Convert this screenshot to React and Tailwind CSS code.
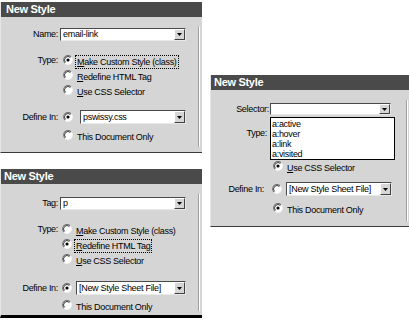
import React from "react";

const FONT = { fontFamily: '"Liberation Sans", Arial, sans-serif' };

function Radio({ checked }) {
  return (
    <svg width="10" height="10" viewBox="0 0 12 12" className="shrink-0">
      <circle cx="6" cy="6" r="5.2" fill="#ffffff" />
      <path d="M2.32 9.68 A5.2 5.2 0 0 1 9.68 2.32" fill="none" stroke="#707070" strokeWidth="1.3" />
      <path d="M3.1 8.9 A4.1 4.1 0 0 1 8.9 3.1" fill="none" stroke="#1a1a1a" strokeWidth="1" />
      <path d="M9.68 2.32 A5.2 5.2 0 0 1 2.32 9.68" fill="none" stroke="#f6f6f6" strokeWidth="1.3" />
      {checked && <circle cx="6" cy="6" r="1.9" fill="#000000" />}
    </svg>
  );
}

function Combo({ w, h, text }) {
  return (
    <div
      className={`flex bg-white border border-t-[#4a4a4a] border-l-[#4a4a4a] border-r-[#e8e8e8] border-b-[#e8e8e8] ${w} ${h}`}
    >
      <div className="flex-1 flex items-center pl-[2px] text-[9px] tracking-[-0.3px] text-black leading-none overflow-hidden whitespace-nowrap">
        {text}
      </div>
      <div className="w-[11px] h-full bg-[#d6d6d6] border border-t-white border-l-white border-r-[#404040] border-b-[#404040] flex items-center justify-center">
        <svg width="5" height="3" viewBox="0 0 5 3">
          <path d="M0 0 H5 L2.5 3 Z" fill="#000" />
        </svg>
      </div>
    </div>
  );
}

function Label({ w, children }) {
  return (
    <div className={`${w} text-right text-[9px] tracking-[-0.3px] text-black leading-none whitespace-nowrap`}>
      {children}
    </div>
  );
}

function Opt({ children, focus }) {
  return (
    <span
      className={`text-[9px] tracking-[-0.3px] text-black leading-none whitespace-nowrap px-[1px] py-[1px] ${
        focus ? "outline-1 outline-dotted outline-black" : ""
      }`}
    >
      {children}
    </span>
  );
}

function TitleBar({ pl }) {
  return (
    <div className={`h-[15px] bg-[#4a4a4a] flex items-center ${pl}`}>
      <span className="text-white font-bold text-[11px] tracking-[-0.3px] leading-none">New Style</span>
    </div>
  );
}

function Separator({ mt, mb }) {
  return <div className={`w-[2px] border-l border-l-[#a0a0a0] border-r border-r-white ${mt} ${mb}`} />;
}

export default function App() {
  return (
    <div className="w-[409px] h-[323px] bg-white overflow-hidden flex" style={FONT}>
      {/* Left column */}
      <div className="w-[202px] flex flex-col pt-[2px]">
        {/* Panel 1 */}
        <div className="h-[151px] flex flex-col bg-[#d5d5d5] border-l border-l-[#e6e6e6] border-b border-b-[#3a3a3a]">
          <TitleBar pl="pl-[5px]" />
          <div className="flex-1 flex">
            <div className="flex-1 flex flex-col">
              <div className="flex items-center mt-[11px] h-[13px]">
                <Label w="w-[57px]">Name:</Label>
                <div className="ml-[2px]">
                  <Combo w="w-[126px]" h="h-[13px]" text="email-link" />
                </div>
              </div>
              <div className="flex items-center mt-[13px] h-[12px]">
                <Label w="w-[57px]">Type:</Label>
                <div className="ml-[5px]"><Radio checked /></div>
                <div className="ml-[3px]"><Opt focus><u>M</u>ake Custom Style (class)</Opt></div>
              </div>
              <div className="flex items-center mt-[3px] h-[12px]">
                <div className="ml-[62px]"><Radio /></div>
                <div className="ml-[3px]"><Opt><u>R</u>edefine HTML Tag</Opt></div>
              </div>
              <div className="flex items-center mt-[3px] h-[12px]">
                <div className="ml-[62px]"><Radio /></div>
                <div className="ml-[3px]"><Opt><u>U</u>se CSS Selector</Opt></div>
              </div>
              <div className="flex items-center mt-[14px] h-[14px]">
                <Label w="w-[57px]">Define In:</Label>
                <div className="ml-[5px]"><Radio checked /></div>
                <div className="ml-[7px]">
                  <Combo w="w-[106px]" h="h-[14px]" text="pswissy.css" />
                </div>
              </div>
              <div className="flex items-center mt-[5px] h-[12px]">
                <div className="ml-[62px]"><Radio /></div>
                <div className="ml-[3px]"><Opt>This Document Only</Opt></div>
              </div>
            </div>
            <Separator mt="mt-[10px]" mb="mb-[5px]" />
            <div className="w-[2px]" />
          </div>
        </div>

        {/* Panel 2 */}
        <div className="mt-[16px] h-[149px] flex flex-col bg-[#d5d5d5] border-l border-l-[#e6e6e6] border-b-[3px] border-b-black">
          <TitleBar pl="pl-[3px]" />
          <div className="flex-1 flex">
            <div className="flex-1 flex flex-col">
              <div className="flex items-center mt-[13px] h-[13px]">
                <Label w="w-[57px]">Tag:</Label>
                <div className="ml-[2px]">
                  <Combo w="w-[126px]" h="h-[13px]" text="p" />
                </div>
              </div>
              <div className="flex items-center mt-[13px] h-[12px]">
                <Label w="w-[57px]">Type:</Label>
                <div className="ml-[4px]"><Radio /></div>
                <div className="ml-[3px]"><Opt><u>M</u>ake Custom Style (class)</Opt></div>
              </div>
              <div className="flex items-center mt-[3px] h-[12px]">
                <div className="ml-[61px]"><Radio checked /></div>
                <div className="ml-[3px]"><Opt focus><u>R</u>edefine HTML Tag</Opt></div>
              </div>
              <div className="flex items-center mt-[3px] h-[12px]">
                <div className="ml-[61px]"><Radio /></div>
                <div className="ml-[3px]"><Opt><u>U</u>se CSS Selector</Opt></div>
              </div>
              <div className="flex items-center mt-[16px] h-[14px]">
                <Label w="w-[57px]">Define In:</Label>
                <div className="ml-[4px]"><Radio checked /></div>
                <div className="ml-[4px]">
                  <Combo w="w-[110px]" h="h-[14px]" text="[New Style Sheet File]" />
                </div>
              </div>
              <div className="flex items-center mt-[4px] h-[12px]">
                <div className="ml-[61px]"><Radio /></div>
                <div className="ml-[3px]"><Opt>This Document Only</Opt></div>
              </div>
            </div>
            <Separator mt="mt-[10px]" mb="mb-[4px]" />
            <div className="w-[2px]" />
          </div>
        </div>
      </div>

      {/* Right column */}
      <div className="ml-[8px] mt-[75px]">
        <div className="relative w-[199px] h-[152px] flex flex-col bg-[#d5d5d5] border-l border-l-[#e6e6e6] border-b border-b-[#3a3a3a]">
          <TitleBar pl="pl-[3px]" />
          <div className="flex-1 flex">
            <div className="flex-1 flex flex-col">
              <div className="flex items-center mt-[13px] h-[12px]">
                <Label w="w-[58px]">Selector:</Label>
                <div className="ml-[1px]">
                  <Combo w="w-[121px]" h="h-[12px]" text="" />
                </div>
              </div>
              <div className="flex items-center mt-[12px] h-[12px]">
                <Label w="w-[56px]">Type:</Label>
                <div className="ml-[6px] invisible"><Radio /></div>
                <div className="ml-[3px] invisible"><Opt><u>M</u>ake Custom Style (class)</Opt></div>
              </div>
              <div className="flex items-center mt-[4px] h-[12px] invisible">
                <div className="ml-[62px]"><Radio /></div>
                <div className="ml-[3px]"><Opt><u>R</u>edefine HTML Tag</Opt></div>
              </div>
              <div className="flex items-center mt-[5px] h-[12px]">
                <div className="ml-[62px]"><Radio checked /></div>
                <div className="ml-[3px]"><Opt><u>U</u>se CSS Selector</Opt></div>
              </div>
              <div className="flex items-center mt-[10px] h-[14px]">
                <Label w="w-[53px]">Define In:</Label>
                <div className="ml-[8px]"><Radio /></div>
                <div className="ml-[4px]">
                  <Combo w="w-[106px]" h="h-[14px]" text="[New Style Sheet File]" />
                </div>
              </div>
              <div className="flex items-center mt-[6px] h-[12px]">
                <div className="ml-[62px]"><Radio checked /></div>
                <div className="ml-[3px]"><Opt>This Document Only</Opt></div>
              </div>
            </div>
            <Separator mt="mt-[10px]" mb="mb-[5px]" />
            <div className="w-[1px]" />
          </div>

          {/* Dropdown list overlay */}
          <div className="absolute left-[59px] top-[42px] w-[125px] h-[43px] bg-white border border-black flex flex-col pt-[1px]">
            {["a:active", "a:hover", "a:link", "a:visited"].map((t) => (
              <div key={t} className="h-[10px] flex items-center pl-[1px] text-[9px] tracking-[-0.3px] leading-none text-black">
                {t}
              </div>
            ))}
          </div>
        </div>
      </div>
    </div>
  );
}
